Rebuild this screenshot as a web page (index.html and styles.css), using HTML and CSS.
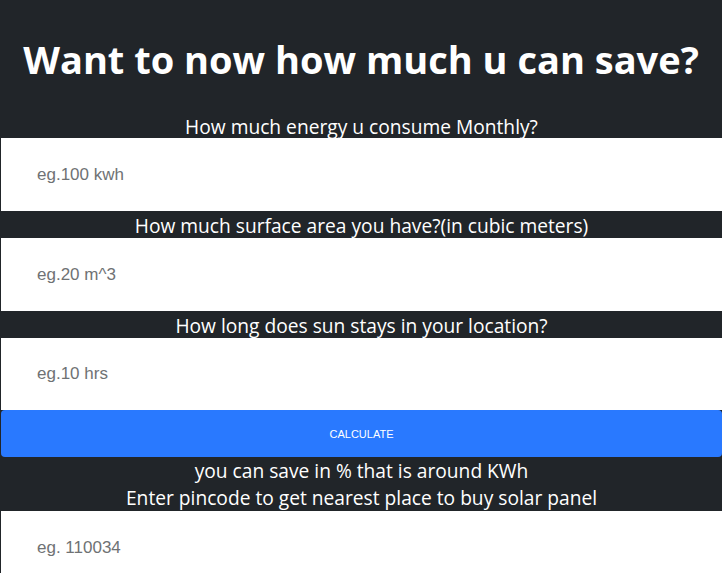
FILE: index.html
```html
<!DOCTYPE html>
<html lang="en">
<head>
  <meta charset="UTF-8" />
  <meta name="viewport" content="width=device-width, initial-scale=1.0"/>
  <title>Solar Savings</title>
  <link rel="stylesheet" href="styles.css">
</head>
<body>
  <header>
    <h1>Want to now how much u can save?</h1>
  </header>

  <form id="calc" onsubmit="return false;">
    <label class="field-label" for="energy">How much energy u consume Monthly?</label>
    <input class="field" type="text" id="energy" placeholder="eg.100 kwh" />

    <label class="field-label" for="area">How much surface area you have?(in cubic meters)</label>
    <input class="field" type="text" id="area" placeholder="eg.20 m^3" />

    <label class="field-label" for="hours">How long does sun stays in your location?</label>
    <input class="field" type="text" id="hours" placeholder="eg.10 hrs" />

    <button class="calc-btn" type="button">Calculate</button>

    <div class="result">
      <p>you can save in % that is around KWh</p>
      <p>Enter pincode to get nearest place to buy solar panel</p>
    </div>

    <input class="field" type="text" id="pincode" placeholder="eg. 110034" />
  </form>
</body>
</html>
```

FILE: styles.css
```css
:root {
  --bg: #212529;
  --primary: #2979ff;
  --placeholder: #6f7274;
}

* {
  margin: 0;
  padding: 0;
  box-sizing: border-box;
}

body {
  background: var(--bg);
  color: white;
  font-family: 'Open Sans', 'Noto Sans', sans-serif;
  overflow: hidden;
}

header {
  padding: 33px 0 27px;
  text-align: center;
}

header h1 {
  font-size: 38px;
  line-height: 53px;
  font-weight: 700;
}

#calc {
  display: flex;
  flex-direction: column;
  padding-left: 1px;
}

.field-label {
  display: block;
  text-align: center;
  font-size: 19.2px;
  line-height: 25px;
  padding-top: 2px;
}

#calc .field-label:first-child {
  line-height: 23px;
}

.field {
  display: block;
  width: 100%;
  height: 73px;
  border: none;
  outline: none;
  background: white;
  padding: 0 36px;
  font-family: 'Liberation Sans', Arial, sans-serif;
  font-size: 17px;
}

#hours {
  height: 72px;
}

.field::placeholder {
  color: var(--placeholder);
}

.calc-btn {
  height: 47px;
  border: none;
  border-radius: 4px;
  background: var(--primary);
  color: white;
  text-transform: uppercase;
  font-family: 'Liberation Sans', Arial, sans-serif;
  font-size: 11px;
  cursor: pointer;
}

.result {
  text-align: center;
  font-size: 19.2px;
  line-height: 27px;
}
```
